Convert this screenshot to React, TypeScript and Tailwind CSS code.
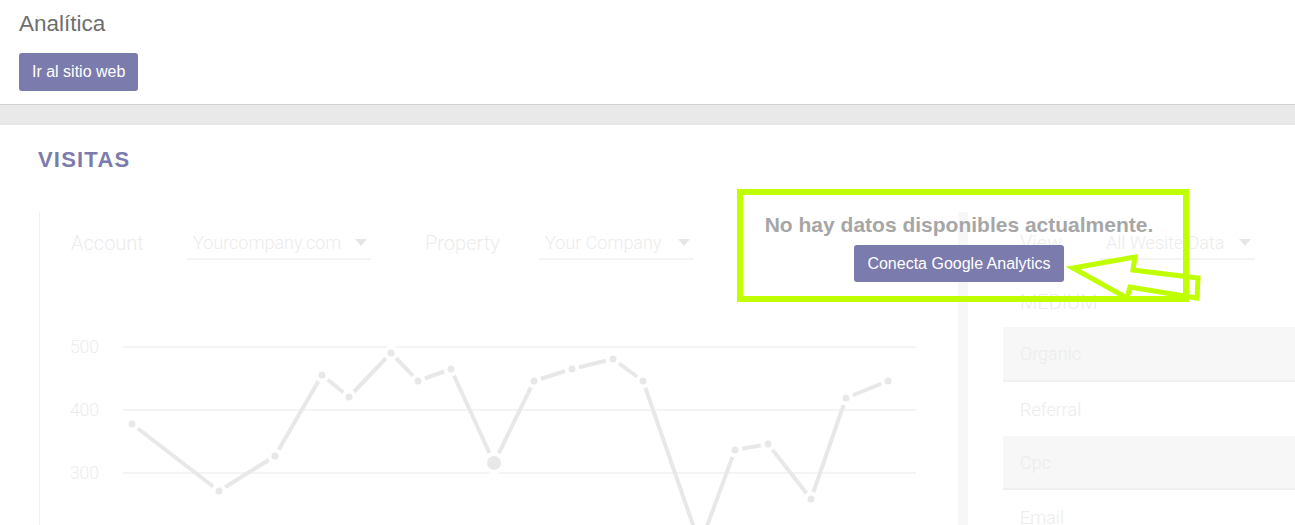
import React from 'react';

const points: [number, number][] = [
  [132, 424], [219, 491], [275, 456], [322, 375], [349, 397], [391, 353],
  [418, 381], [451, 369], [494, 463], [534, 381], [572, 369], [613, 359],
  [643, 381], [700, 545], [735, 450], [768, 444], [811, 499], [846, 398], [888, 381],
];

// chart svg starts at page x=40, y=272
const OX = 40;
const OY = 272;

function FadedSelect({ label, value, labelW, selectW }: { label: string; value: string; labelW: string; selectW: string }) {
  return (
    <div className="flex items-center">
      <div className={`${labelW} text-[20px] font-light text-[#ececec]`}>{label}</div>
      <div className={`${selectW} flex items-center justify-between border-b-2 border-[#f3f3f3] pl-[6px] pr-[4px] h-[34px]`}>
        <span className="text-[18px] font-light text-[#ececec]">{value}</span>
        <span className="w-0 h-0 border-l-[6px] border-r-[6px] border-t-[7px] border-l-transparent border-r-transparent border-t-[#e6e6e6]" />
      </div>
    </div>
  );
}

export default function App() {
  const line = points.map(([x, y]) => `${x - OX},${y - OY}`).join(' ');

  return (
    <div className="relative w-[1295px] h-[525px] overflow-hidden bg-white" style={{ fontFamily: '"Liberation Sans", Arial, sans-serif' }}>
      {/* Header */}
      <div className="h-[105px] border-b border-[#d0d0d0] px-[19px] pt-[10px]">
        <h1 className="text-[22.5px] leading-[28px] text-[#6e6e6e]">Analítica</h1>
        <button className="mt-[15px] h-[38px] px-[13px] rounded-[3px] bg-[#7c7bad] text-white text-[16px]">
          Ir al sitio web
        </button>
      </div>
      <div className="h-[20px] bg-[#e9e9e9]" />

      {/* Main */}
      <div className="pt-[22px]">
        <h2 className="pl-[38px] text-[22px] leading-[26px] font-bold text-[#7c7bad] tracking-[1.2px]">VISITAS</h2>

        <div className="mt-[39px] flex" style={{ fontFamily: 'Roboto, sans-serif' }}>
          {/* Left panel */}
          <div className="ml-[39px] w-[919px] border-l border-[#f0f0f0] h-[313px] flex flex-col">
            <div className="h-[60px] flex items-center pl-[31px] pt-[2px]">
              <FadedSelect label="Account" value="Yourcompany.com" labelW="w-[116px]" selectW="w-[184px]" />
              <div className="w-[54px]" />
              <FadedSelect label="Property" value="Your Company" labelW="w-[114px]" selectW="w-[155px]" />
            </div>
            <svg width="918" height="253" className="block">
              {[347, 410, 473].map((y) => (
                <line key={y} x1={123 - OX} x2={916 - OX} y1={y - OY} y2={y - OY} stroke="#f1f1f1" strokeWidth="1.5" />
              ))}
              {[['500', 347], ['400', 410], ['300', 473]].map(([t, y]) => (
                <text key={t} x={99 - OX} y={(y as number) - OY + 6} textAnchor="end" fontSize="17.5" fontWeight="300" fill="#ededed" fontFamily="Roboto, sans-serif">
                  {t}
                </text>
              ))}
              <polyline points={line} fill="none" stroke="#e8e8e8" strokeWidth="4" strokeLinejoin="round" />
              {points.map(([x, y], i) => (
                <circle key={i} cx={x - OX} cy={y - OY} r={i === 8 ? 9 : 5.5} fill="#e8e8e8" stroke="#fff" strokeWidth="4" />
              ))}
            </svg>
          </div>

          {/* Right panel */}
          <div className="flex-1 border-l-[10px] border-[#f7f7f7] pl-[35px] h-[313px]">
            <div className="h-[60px] flex items-center pl-[17px] pt-[2px]">
              <FadedSelect label="View" value="All Wesite Data" labelW="w-[80px]" selectW="w-[155px]" />
            </div>
            <div className="pl-[17px] text-[20px] font-light text-[#ececec] h-[55px] pt-[18px] leading-[24px]">MEDIUM</div>
            <div className="h-[55px] bg-[#f6f7f6] border-b-2 border-[#f0f0f0] flex items-center pl-[17px] text-[18px] font-light text-[#ececec]">Organic</div>
            <div className="h-[54px] flex items-center pl-[17px] text-[18px] font-light text-[#ececec]">Referral</div>
            <div className="h-[54px] bg-[#f6f7f6] border-b-2 border-[#f0f0f0] flex items-center pl-[17px] text-[18px] font-light text-[#ececec]">Cpc</div>
            <div className="h-[54px] flex items-center pl-[17px] text-[18px] font-light text-[#ececec]">Email</div>
          </div>
        </div>
      </div>

      {/* Notice overlay */}
      <div className="absolute left-[737px] top-[189px] w-[452px] h-[113px] border-[6px] border-[#c0ff00] flex flex-col items-center pr-[8px] pt-[18px]">
        <p className="text-[21px] leading-[24px] font-bold text-[#a6a6a6]">No hay datos disponibles actualmente.</p>
        <button className="mt-[8px] h-[37px] px-[13px] rounded-[3px] bg-[#7c7bad] text-white text-[16px]">
          Conecta Google Analytics
        </button>
      </div>
      <svg className="absolute left-[1060px] top-[245px]" width="150" height="65">
        <polygon
          points="13,23 75,12 73,25 138,33 137,53 70,42 67,53"
          fill="none"
          stroke="#c0ff00"
          strokeWidth="5"
          strokeLinejoin="miter"
        />
      </svg>
    </div>
  );
}
